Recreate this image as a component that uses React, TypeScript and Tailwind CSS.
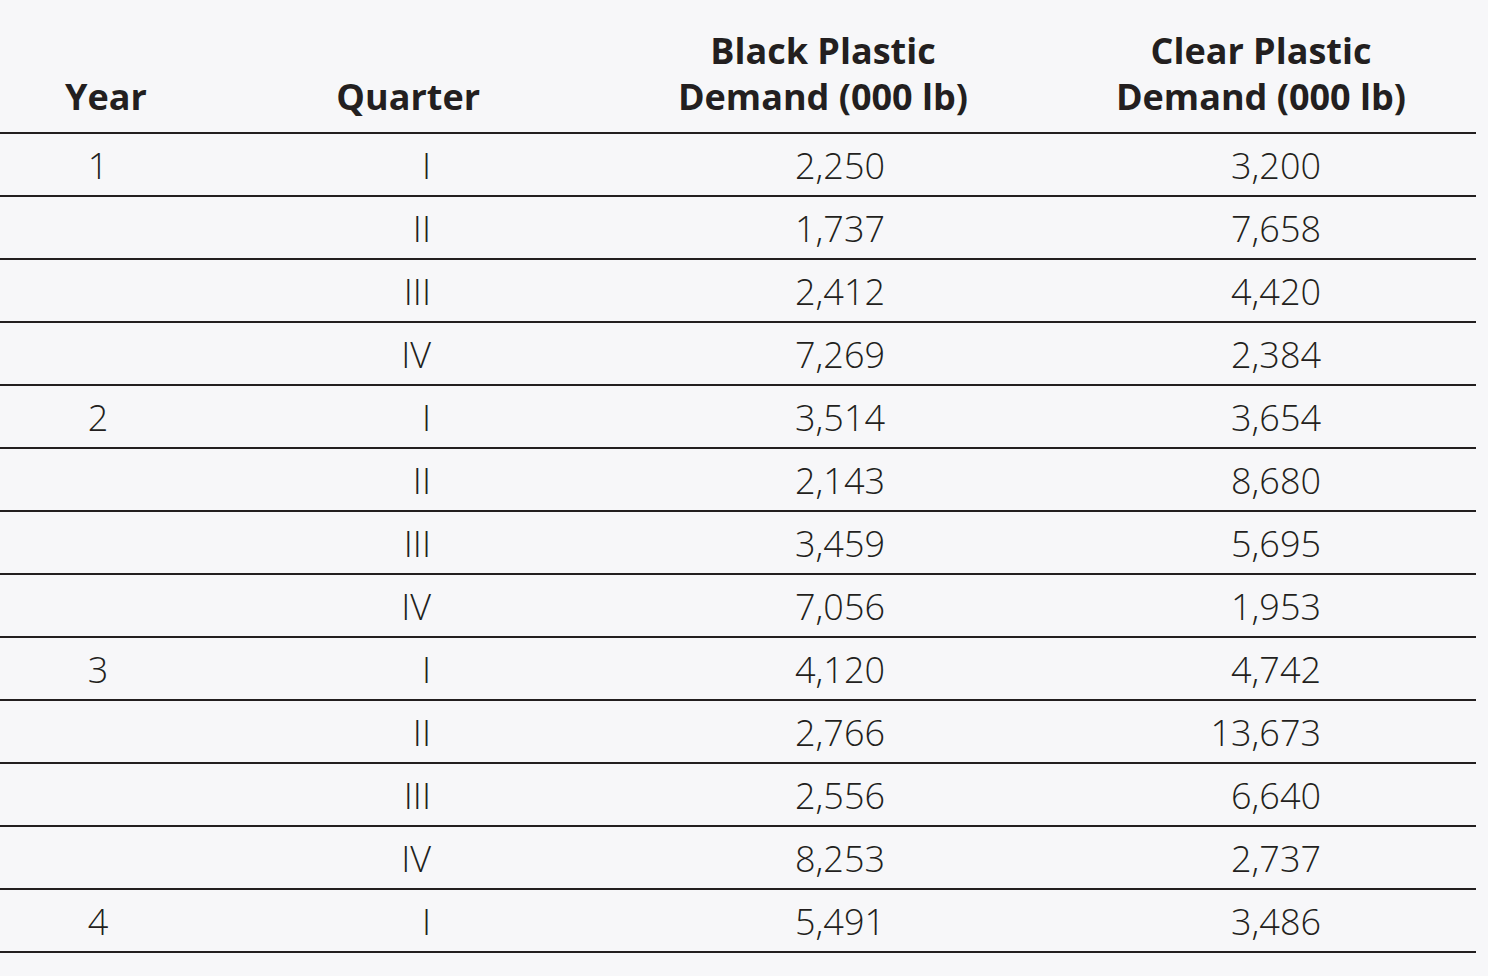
const rows: [string, string, string, string][] = [
  ['1', 'I', '2,250', '3,200'],
  ['', 'II', '1,737', '7,658'],
  ['', 'III', '2,412', '4,420'],
  ['', 'IV', '7,269', '2,384'],
  ['2', 'I', '3,514', '3,654'],
  ['', 'II', '2,143', '8,680'],
  ['', 'III', '3,459', '5,695'],
  ['', 'IV', '7,056', '1,953'],
  ['3', 'I', '4,120', '4,742'],
  ['', 'II', '2,766', '13,673'],
  ['', 'III', '2,556', '6,640'],
  ['', 'IV', '8,253', '2,737'],
  ['4', 'I', '5,491', '3,486'],
]

const grid = 'grid grid-cols-[196px_324px_480px_476px]'

export default function App() {
  return (
    <div className="min-h-screen w-full bg-[#f7f7f9] text-[#231f20] font-['Open_Sans',sans-serif]">
      <div className="w-[1476px]">
        {/* Header */}
        <div className={`${grid} h-[134px] items-end border-b-2 border-[#231f20] pb-[12px] text-[36px] font-bold leading-[46px]`}>
          <div className="pl-[16px] text-center">Year</div>
          <div className="pr-[40px] text-right">Quarter</div>
          <div className="flex justify-end pr-[32px]">
            <div className="text-center">
              Black Plastic
              <br />
              Demand (000 lb)
            </div>
          </div>
          <div className="flex justify-end pr-[70px]">
            <div className="text-center">
              Clear Plastic
              <br />
              Demand (000 lb)
            </div>
          </div>
        </div>

        {/* Body */}
        {rows.map(([year, quarter, black, clear], i) => (
          <div
            key={i}
            className={`${grid} h-[63px] items-center border-b-2 border-[#231f20] pt-[3px] text-[36px] font-[350] leading-none`}
          >
            <div className="text-center">{year}</div>
            <div className="pr-[89px] text-right">{quarter}</div>
            <div className="pr-[115px] text-right">{black}</div>
            <div className="pr-[155px] text-right">{clear}</div>
          </div>
        ))}
      </div>
    </div>
  )
}
